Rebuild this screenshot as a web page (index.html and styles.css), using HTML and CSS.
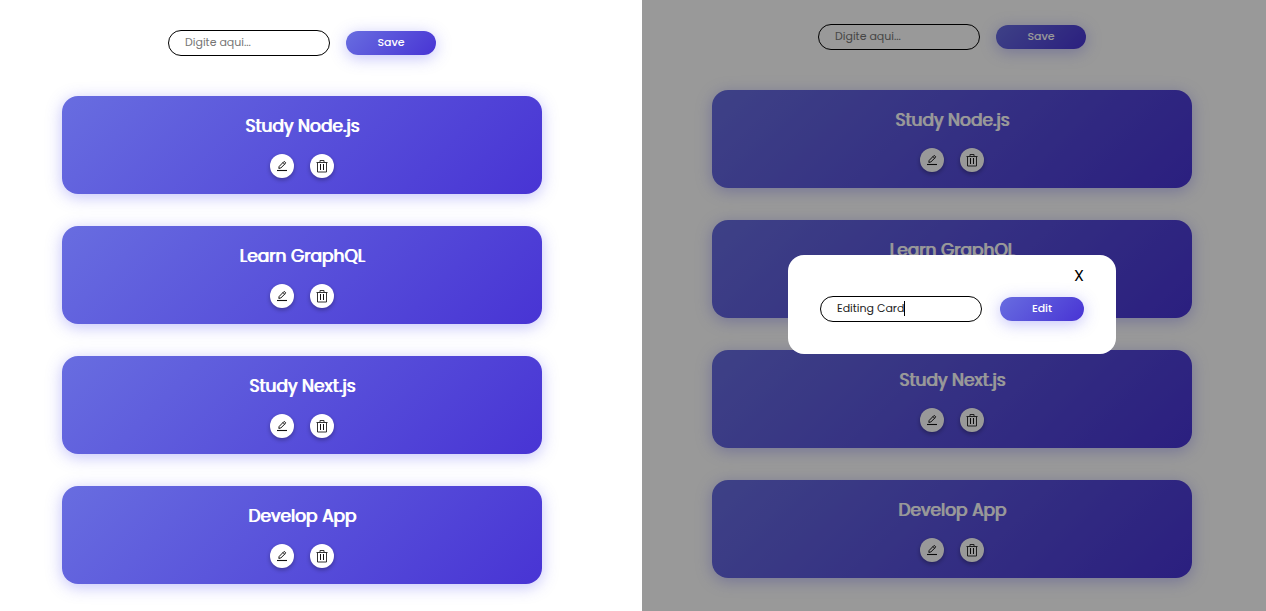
FILE: index.html
```html
<!DOCTYPE html>
<html lang="en">
<head>
<meta charset="utf-8">
<title>Cards</title>
<link rel="stylesheet" href="styles.css">
</head>
<body>
<svg class="sprite" aria-hidden="true">
  <symbol id="pencil" viewBox="0 0 12 12">
    <path d="M1 10.5h10" stroke-width="1.1"/>
    <path d="M2.8 8.4 3.2 6.4 7.6 1.9Q8.3 1.3 9 1.9L9.3 2.2Q9.9 2.9 9.3 3.5L4.8 8Z"/>
    <path d="M7 2.6 8.6 4.2"/>
  </symbol>
  <symbol id="trash" viewBox="0 0 12 14">
    <path d="M0.5 3.5h11M4 3.2V1.5h4v1.7M1.5 3.5v9.5h9V3.5"/>
    <path d="M4.5 5v6M7.5 5v6" stroke="#111"/>
  </symbol>
</svg>
<main class="screens">
  <section class="screen screen-list">
    <form class="entry">
      <input class="field" type="text" placeholder="Digite aqui..." aria-label="New card">
      <button class="action" type="button">Save</button>
    </form>
    <ul class="cards">
      <li class="card"><h2 class="title">Study Node.js</h2><div class="tools"><button class="tool" type="button" aria-label="Edit card"><svg class="pencil"><use href="#pencil"/></svg></button><button class="tool" type="button" aria-label="Delete card"><svg class="trash"><use href="#trash"/></svg></button></div></li>
      <li class="card"><h2 class="title">Learn GraphQL</h2><div class="tools"><button class="tool" type="button" aria-label="Edit card"><svg class="pencil"><use href="#pencil"/></svg></button><button class="tool" type="button" aria-label="Delete card"><svg class="trash"><use href="#trash"/></svg></button></div></li>
      <li class="card"><h2 class="title">Study Next.js</h2><div class="tools"><button class="tool" type="button" aria-label="Edit card"><svg class="pencil"><use href="#pencil"/></svg></button><button class="tool" type="button" aria-label="Delete card"><svg class="trash"><use href="#trash"/></svg></button></div></li>
      <li class="card"><h2 class="title">Develop App</h2><div class="tools"><button class="tool" type="button" aria-label="Edit card"><svg class="pencil"><use href="#pencil"/></svg></button><button class="tool" type="button" aria-label="Delete card"><svg class="trash"><use href="#trash"/></svg></button></div></li>
    </ul>
  </section>
  <section class="screen screen-edit">
    <form class="entry">
      <input class="field" type="text" placeholder="Digite aqui..." aria-label="New card">
      <button class="action" type="button">Save</button>
    </form>
    <ul class="cards">
      <li class="card"><h2 class="title">Study Node.js</h2><div class="tools"><button class="tool" type="button" aria-label="Edit card"><svg class="pencil"><use href="#pencil"/></svg></button><button class="tool" type="button" aria-label="Delete card"><svg class="trash"><use href="#trash"/></svg></button></div></li>
      <li class="card"><h2 class="title">Learn GraphQL</h2><div class="tools"><button class="tool" type="button" aria-label="Edit card"><svg class="pencil"><use href="#pencil"/></svg></button><button class="tool" type="button" aria-label="Delete card"><svg class="trash"><use href="#trash"/></svg></button></div></li>
      <li class="card"><h2 class="title">Study Next.js</h2><div class="tools"><button class="tool" type="button" aria-label="Edit card"><svg class="pencil"><use href="#pencil"/></svg></button><button class="tool" type="button" aria-label="Delete card"><svg class="trash"><use href="#trash"/></svg></button></div></li>
      <li class="card"><h2 class="title">Develop App</h2><div class="tools"><button class="tool" type="button" aria-label="Edit card"><svg class="pencil"><use href="#pencil"/></svg></button><button class="tool" type="button" aria-label="Delete card"><svg class="trash"><use href="#trash"/></svg></button></div></li>
    </ul>
    <div class="overlay">
      <div class="modal" role="dialog" aria-label="Edit card">
        <button class="close" type="button">X</button>
        <form class="modal-form">
          <div class="caret-box"><input class="field" type="text" value="Editing Card" aria-label="Card name"></div>
          <button class="action" type="button">Edit</button>
        </form>
      </div>
    </div>
  </section>
</main>
</body>
</html>
```
FILE: styles.css
```css
* {
  box-sizing: border-box;
}

body {
  margin: 0;
  background: #fff;
  font-family: Poppins, Lato, "Open Sans", sans-serif;
}

button,
input {
  font-family: inherit;
}

.sprite {
  display: none;
}

.screens {
  display: grid;
  grid-template-columns: 642fr 624fr;
  min-height: 100vh;
}

.screen {
  position: relative;
  display: flex;
  flex-direction: column;
  align-items: center;
  gap: 40px;
  overflow: hidden;
}

.screen-list {
  padding: 30px 38px 24px 0;
}

.screen-edit {
  padding: 24px 4px 24px 0;
}

.entry {
  display: flex;
  align-items: center;
  gap: 16px;
}

.field {
  display: block;
  width: 162px;
  height: 26px;
  padding: 0 16px 2px;
  border: 1px solid #000;
  border-radius: 13px;
  outline: none;
  background: #fff;
  color: #222;
  font-size: 11px;
}

.field::placeholder {
  color: #757575;
}

.action {
  min-width: 84px;
  height: 24px;
  padding: 0 16px 2px;
  border: 0;
  border-radius: 12px;
  background: linear-gradient(135deg, #686de0, #4834d4);
  box-shadow: 0 3px 16px rgba(80, 76, 240, 0.34);
  color: #fff;
  font-size: 11px;
  font-weight: 500;
}

.entry .action {
  min-width: 90px;
}

.cards {
  display: flex;
  flex-direction: column;
  gap: 32px;
  width: 100%;
  max-width: 480px;
  margin: 0;
  padding: 0;
  list-style: none;
}

.card {
  display: flex;
  flex-direction: column;
  align-items: center;
  gap: 14px;
  padding: 16px;
  border-radius: 16px;
  background: linear-gradient(135deg, #686de0, #4834d4);
  box-shadow: 0 3px 16px rgba(80, 76, 240, 0.34);
}

.title {
  margin: 0;
  color: #fff;
  font-size: 17px;
  font-weight: 400;
  line-height: 28px;
  text-shadow: 1px 0 #fff;
}

.tools {
  display: flex;
  gap: 16px;
}

.tool {
  display: grid;
  place-items: center;
  width: 24px;
  height: 24px;
  padding: 0;
  border: 0;
  border-radius: 50%;
  background: #fff;
  box-shadow: 0 2px 4px rgba(0, 0, 0, 0.3);
}

.pencil,
.trash {
  fill: none;
  stroke: #111;
  stroke-width: 1;
}

.pencil {
  width: 12px;
  height: 12px;
}

.trash {
  width: 12px;
  height: 14px;
  stroke: #333;
}

.overlay {
  position: absolute;
  inset: 0;
  display: flex;
  align-items: center;
  justify-content: center;
  padding: 0 4px 2px 0;
  background: rgba(0, 0, 0, 0.4);
}

.modal {
  display: flex;
  flex-direction: column;
  align-items: flex-end;
  gap: 8px;
  width: 328px;
  padding: 9px 32px 32px;
  border-radius: 16px;
  background: #fff;
}

.close {
  padding: 0;
  border: 0;
  background: none;
  color: #000;
  font-size: 16px;
  line-height: 24px;
}

.modal-form {
  display: flex;
  align-items: center;
  justify-content: space-between;
  width: 100%;
}

.caret-box {
  position: relative;
}

.caret-box::after {
  content: "";
  position: absolute;
  top: 5px;
  left: 84px;
  width: 1px;
  height: 15px;
  background: #000;
}
```
